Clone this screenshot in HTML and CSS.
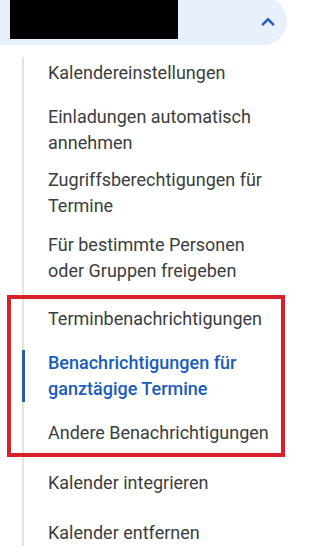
FILE: index.html
```html
<!DOCTYPE html>
<html lang="de">
<head>
<meta charset="utf-8">
<title>Kalendereinstellungen</title>
<link rel="stylesheet" href="styles.css">
</head>
<body>
<div class="page">
  <div class="header">
    <div class="redacted"></div>
    <svg class="chevron" viewBox="0 0 24 24" aria-hidden="true"><path d="M12 8l-6 6 1.41 1.41L12 10.83l4.59 4.58L18 14z"/></svg>
  </div>
  <nav class="menu">
    <div class="item">Kalendereinstellungen</div>
    <div class="item">Einladungen automatisch annehmen</div>
    <div class="item gap-s">Zugriffsberechtigungen für Termine</div>
    <div class="item gap-m">Für bestimmte Personen oder Gruppen freigeben</div>
    <div class="item gap-l">Terminbenachrichtigungen</div>
    <div class="item active">Benachrichtigungen für ganztägige Termine</div>
    <div class="item">Andere Benachrichtigungen</div>
    <div class="item gap-xl">Kalender integrieren</div>
    <div class="item gap-xl">Kalender entfernen</div>
  </nav>
  <div class="highlight"></div>
</div>
</body>
</html>
```
FILE: styles.css
```css
html, body {
  margin: 0;
  padding: 0;
  background: #ffffff;
}
.page {
  position: relative;
  width: 287px;
  height: 552px;
  overflow: hidden;
  font-family: Roboto, "Noto Sans", Arial, sans-serif;
}
.header {
  margin-top: -3px;
  height: 48px;
  background: #e8f0fe;
  border-radius: 0 24px 24px 0;
  display: flex;
  align-items: center;
  justify-content: space-between;
  padding: 0 6px 0 10px;
  box-sizing: border-box;
}
.redacted {
  width: 168px;
  height: 39px;
  background: #000;
  margin-top: 3px;
  align-self: flex-start;
}
.chevron {
  width: 26px;
  height: 26px;
  fill: #1a5dbb;
  stroke: #1a5dbb;
  stroke-width: 0.4;
  margin-top: 1px;
}
.menu {
  margin: 12px 0 0 22px;
  padding-top: 3px;
  border-left: 2px solid #e3e3e3;
  width: 250px;
}
.item {
  position: relative;
  padding-left: 24px;
  font-size: 18px;
  line-height: 26px;
  color: #3a3d40;
  margin-top: 18px;
}
.item:first-child {
  margin-top: 0;
}
.item.gap-s { margin-top: 11px; }
.item.gap-m { margin-top: 13px; }
.item.gap-l { margin-top: 22px; }
.item.gap-xl { margin-top: 24px; }
.item.active {
  color: #1a5dbb;
  font-weight: 500;
}
.item.active::before {
  content: "";
  position: absolute;
  left: -2px;
  top: 0;
  bottom: 0;
  width: 3px;
  background: #2d5f9e;
}
.highlight {
  position: absolute;
  left: 7px;
  top: 295px;
  width: 278px;
  height: 162px;
  border: 4px solid #d9202b;
  box-sizing: border-box;
}
```
